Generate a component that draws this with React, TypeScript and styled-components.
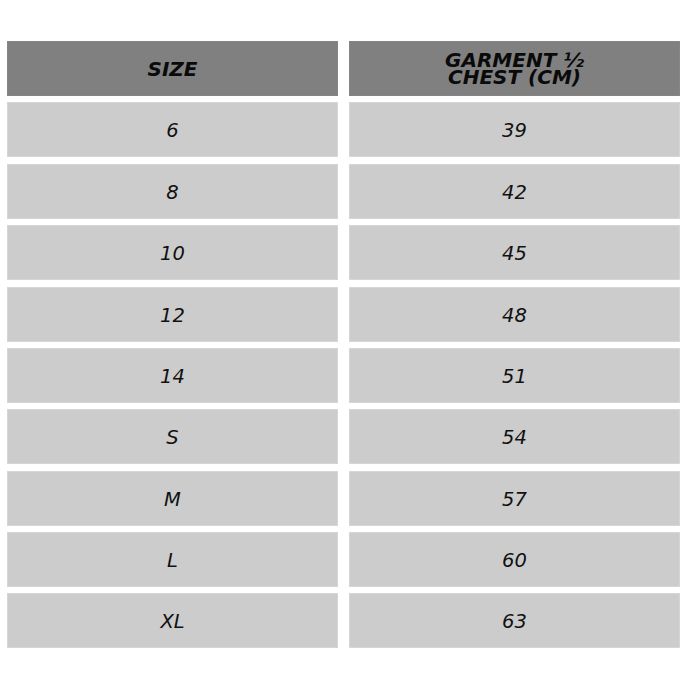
import React from "react";
import styled, { createGlobalStyle } from "styled-components";

const GlobalStyle = createGlobalStyle`
  html, body {
    margin: 0;
    padding: 0;
    background: #ffffff;
  }
  body {
    font-family: "DejaVu Sans", Verdana, sans-serif;
  }
`;

const Page = styled.div`
  width: 688px;
  height: 688px;
  box-sizing: border-box;
  padding: 41px 8px 0 7px;
  background: #ffffff;
`;

const Table = styled.div`
  display: grid;
  grid-template-columns: 331px 331px;
  grid-auto-rows: 55px;
  column-gap: 11px;
  row-gap: 6.375px;
`;

const HeadCell = styled.div`
  box-sizing: border-box;
  display: flex;
  align-items: center;
  justify-content: center;
  text-align: center;
  background: #808080;
  border: 1px solid #858585;
  color: #0a0a0a;
  font-family: "DejaVu Sans", Verdana, sans-serif;
  font-weight: bold;
  font-style: italic;
  font-size: 20px;
  line-height: 17px;
  padding-top: 1px;
`;

const Cell = styled.div`
  box-sizing: border-box;
  display: flex;
  align-items: center;
  justify-content: center;
  background: #cccccc;
  border: 1px solid #d6d6d6;
  color: #111111;
  font-family: "DejaVu Sans", Verdana, sans-serif;
  font-style: italic;
  font-size: 19.5px;
  padding-top: 2px;
`;

const rows: [string, string][] = [
  ["6", "39"],
  ["8", "42"],
  ["10", "45"],
  ["12", "48"],
  ["14", "51"],
  ["S", "54"],
  ["M", "57"],
  ["L", "60"],
  ["XL", "63"],
];

export default function App() {
  return (
    <>
      <GlobalStyle />
      <Page>
        <Table>
          <HeadCell>SIZE</HeadCell>
          <HeadCell>
            GARMENT ½
            <br />
            CHEST (CM)
          </HeadCell>
          {rows.map(([size, chest]) => (
            <React.Fragment key={size}>
              <Cell>{size}</Cell>
              <Cell>{chest}</Cell>
            </React.Fragment>
          ))}
        </Table>
      </Page>
    </>
  );
}
